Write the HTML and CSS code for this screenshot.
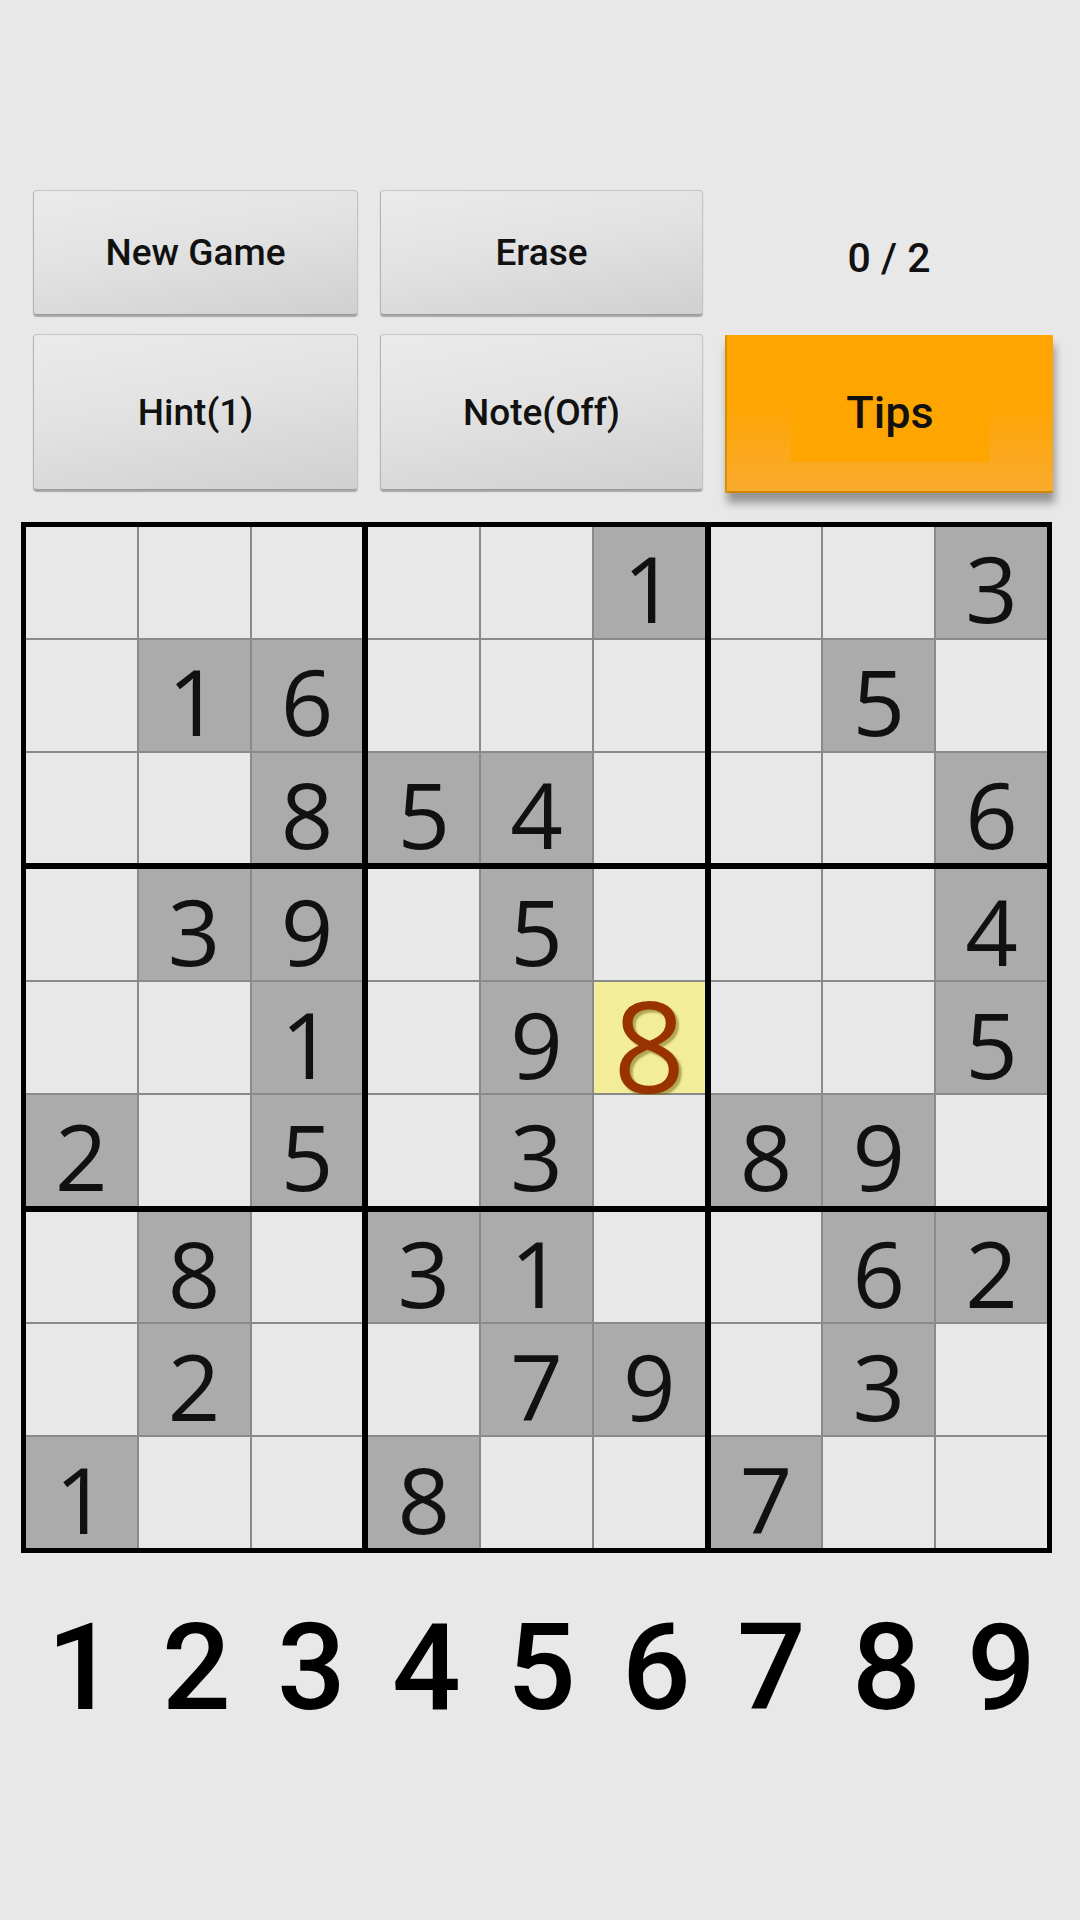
FILE: index.html
```html
<!DOCTYPE html>
<html>
<head>
<meta charset="utf-8">
<link rel="stylesheet" href="styles.css">
</head>
<body>
<div class="screen">
  <div class="controls">
    <button class="btn">New Game</button>
    <button class="btn">Erase</button>
    <div class="score">0 / 2</div>
    <button class="btn tall">Hint(1)</button>
    <button class="btn tall">Note(Off)</button>
    <button class="btn tips"><span class="tips-label">Tips</span></button>
  </div>

  <div class="board">
    <div class="box">
      <div class="cell"></div><div class="cell"></div><div class="cell"></div>
      <div class="cell"></div><div class="cell given">1</div><div class="cell given">6</div>
      <div class="cell"></div><div class="cell"></div><div class="cell given">8</div>
    </div>
    <div class="box">
      <div class="cell"></div><div class="cell"></div><div class="cell given">1</div>
      <div class="cell"></div><div class="cell"></div><div class="cell"></div>
      <div class="cell given">5</div><div class="cell given">4</div><div class="cell"></div>
    </div>
    <div class="box">
      <div class="cell"></div><div class="cell"></div><div class="cell given">3</div>
      <div class="cell"></div><div class="cell given">5</div><div class="cell"></div>
      <div class="cell"></div><div class="cell"></div><div class="cell given">6</div>
    </div>
    <div class="box">
      <div class="cell"></div><div class="cell given">3</div><div class="cell given">9</div>
      <div class="cell"></div><div class="cell"></div><div class="cell given">1</div>
      <div class="cell given">2</div><div class="cell"></div><div class="cell given">5</div>
    </div>
    <div class="box">
      <div class="cell"></div><div class="cell given">5</div><div class="cell"></div>
      <div class="cell"></div><div class="cell given">9</div><div class="cell selected">8</div>
      <div class="cell"></div><div class="cell given">3</div><div class="cell"></div>
    </div>
    <div class="box">
      <div class="cell"></div><div class="cell"></div><div class="cell given">4</div>
      <div class="cell"></div><div class="cell"></div><div class="cell given">5</div>
      <div class="cell given">8</div><div class="cell given">9</div><div class="cell"></div>
    </div>
    <div class="box">
      <div class="cell"></div><div class="cell given">8</div><div class="cell"></div>
      <div class="cell"></div><div class="cell given">2</div><div class="cell"></div>
      <div class="cell given">1</div><div class="cell"></div><div class="cell"></div>
    </div>
    <div class="box">
      <div class="cell given">3</div><div class="cell given">1</div><div class="cell"></div>
      <div class="cell"></div><div class="cell given">7</div><div class="cell given">9</div>
      <div class="cell given">8</div><div class="cell"></div><div class="cell"></div>
    </div>
    <div class="box">
      <div class="cell"></div><div class="cell given">6</div><div class="cell given">2</div>
      <div class="cell"></div><div class="cell given">3</div><div class="cell"></div>
      <div class="cell given">7</div><div class="cell"></div><div class="cell"></div>
    </div>
  </div>

  <div class="pad">
    <div class="key">1</div><div class="key">2</div><div class="key">3</div>
    <div class="key">4</div><div class="key">5</div><div class="key">6</div>
    <div class="key">7</div><div class="key">8</div><div class="key">9</div>
  </div>
</div>
</body>
</html>
```
FILE: styles.css
```css
html, body {
  margin: 0;
  padding: 0;
  background: #e8e8e8;
}

.screen {
  width: 1080px;
  height: 1920px;
  background: #e8e8e8;
  font-family: Roboto, "Liberation Sans", sans-serif;
  color: #111;
}

.controls {
  display: grid;
  grid-template-columns: 325px 323px 328px;
  grid-template-rows: 125px 156px;
  column-gap: 22px;
  row-gap: 19px;
  padding: 190px 0 0 33px;
}

.btn {
  margin: 0;
  padding: 0;
  font-family: Roboto, "Liberation Sans", sans-serif;
  font-size: 37px;
  font-weight: 500;
  color: #111;
  border: 1px solid #c4c4c4;
  border-bottom-color: #9a9a9a;
  border-left-color: #b4b4b4;
  border-radius: 4px;
  background: linear-gradient(170deg, #ebebeb 0%, #e2e2e2 45%, #d0d0d0 100%);
  box-shadow: 0 2px 1px rgba(0, 0, 0, 0.28);
}

.score {
  display: flex;
  align-items: center;
  justify-content: center;
  padding-top: 10px;
  font-size: 41px;
  font-weight: 500;
  color: #111;
}

.tips {
  border: none;
  border-left: 2px solid #d98e00;
  border-bottom: 2px solid #cf8700;
  border-radius: 1px;
  background: linear-gradient(180deg, #ffa400 0%, #ffa400 42%, #f9ab2e 100%);
  box-shadow: 2px 10px 9px rgba(0, 0, 0, 0.36);
  display: flex;
  align-items: center;
  justify-content: center;
  font-size: 45px;
  margin-top: 1px;
  height: 158px;
}

.tips-label {
  display: block;
  background: #ffa500;
  padding: 0 55px;
  line-height: 98px;
}

.board {
  width: 1031px;
  margin: 32px 0 0 21px;
  box-sizing: border-box;
  padding: 5px;
  background: #000;
  display: grid;
  grid-template-columns: repeat(3, minmax(0, 1fr));
  gap: 6px;
}

.box {
  display: grid;
  grid-template-columns: repeat(3, minmax(0, 1fr));
  gap: 2px;
  background: #8a8a8a;
  min-width: 0;
}

.cell {
  aspect-ratio: 1 / 1;
  min-width: 0;
  min-height: 0;
  background: #e8e8e8;
  display: flex;
  align-items: center;
  justify-content: center;
  box-sizing: border-box;
  padding-top: 12px;
  font-family: "Open Sans", "DejaVu Sans", sans-serif;
  font-weight: 400;
  font-size: 92px;
  line-height: 1;
  color: #111;
}

.given {
  background: #ababab;
}

.selected {
  background: #f3ed9a;
  color: #983200;
  font-weight: 400;
  font-size: 126px;
  line-height: 0.8;
  padding-top: 14px;
  text-shadow: 3px 3px 2px rgba(120, 110, 20, 0.55);
}

.pad {
  display: grid;
  grid-template-columns: repeat(9, 115px);
  margin: 55px 0 0 24px;
}

.key {
  text-align: center;
  font-family: Roboto, "Liberation Sans", sans-serif;
  font-weight: 500;
  font-size: 121px;
  line-height: 1;
  color: #000;
}
```
